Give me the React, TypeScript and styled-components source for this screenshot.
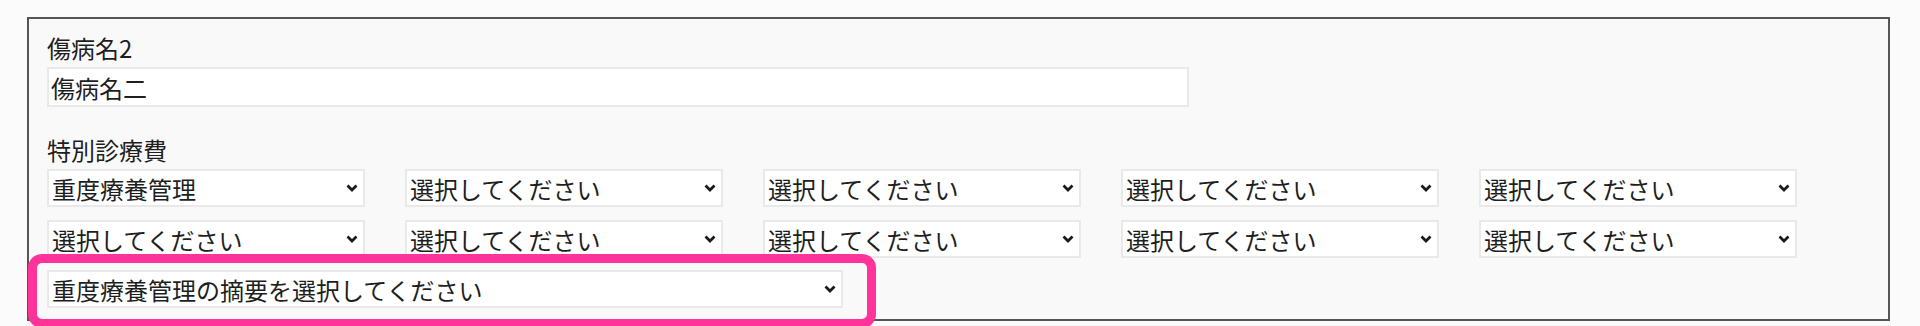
import styled, { createGlobalStyle } from 'styled-components';

const GlobalStyle = createGlobalStyle`
  html, body {
    margin: 0;
    padding: 0;
    height: 326px;
    overflow: hidden;
    background: #fbfbfb;
    font-family: "Noto Sans CJK JP", "Noto Sans", sans-serif;
    color: #1e1e1e;
  }
`;

const Page = styled.div`
  padding: 17px 0 0 27px;
  height: 326px;
  box-sizing: border-box;
  overflow: hidden;
`;

const Panel = styled.div`
  width: 1863px;
  box-sizing: border-box;
  border: 2px solid #555555;
  background: #f9f9f9;
  padding: 11px 18px 11px;
`;

const Field = styled.div<{ $gap?: number }>`
  margin-top: ${(p) => p.$gap ?? 0}px;
`;

const Label = styled.div`
  font-size: 24px;
  line-height: 36px;
  margin-bottom: 1px;
`;

const TextInput = styled.input`
  display: block;
  width: 1142px;
  height: 40px;
  box-sizing: border-box;
  border: 2px solid #e9e9e9;
  background: #ffffff;
  padding: 0 2px;
  font-family: inherit;
  font-size: 24px;
  color: #1e1e1e;
  outline: none;
`;

const SelectGrid = styled.div`
  display: grid;
  grid-template-columns: repeat(5, 318px);
  column-gap: 40px;
  row-gap: 13px;
`;

const SelectWrap = styled.div<{ $width?: number }>`
  position: relative;
  width: ${(p) => (p.$width ? `${p.$width}px` : 'auto')};
  height: 38px;
  box-sizing: border-box;
  border: 2px solid #e9e9e9;
  background: #ffffff;
`;

const NativeSelect = styled.select`
  appearance: none;
  width: 100%;
  height: 100%;
  border: none;
  background: transparent;
  padding: 0 24px 0 3px;
  font-family: inherit;
  font-size: 24px;
  color: #1e1e1e;
  outline: none;
`;

const Chevron = styled.svg`
  position: absolute;
  right: 5px;
  top: 50%;
  margin-top: -4px;
  pointer-events: none;
`;

const HighlightRow = styled.div`
  position: relative;
  margin-top: 12px;
`;

const Highlight = styled.div`
  position: absolute;
  left: -19px;
  top: -16px;
  width: 848px;
  height: 74px;
  box-sizing: border-box;
  border: 9px solid #ff3399;
  border-radius: 14px;
  pointer-events: none;
`;

const Select = ({ value, width }: { value: string; width?: number }) => (
  <SelectWrap $width={width}>
    <NativeSelect defaultValue={value}>
      <option>{value}</option>
    </NativeSelect>
    <Chevron width="12" height="8" viewBox="0 0 12 8">
      <polyline points="1.5,1.5 6,6 10.5,1.5" fill="none" stroke="#1a1a1a" strokeWidth="2.8" />
    </Chevron>
  </SelectWrap>
);

const placeholder = '選択してください';
const specials = [
  '重度療養管理',
  placeholder,
  placeholder,
  placeholder,
  placeholder,
  placeholder,
  placeholder,
  placeholder,
  placeholder,
  placeholder,
];

export default function App() {
  return (
    <>
      <GlobalStyle />
      <Page>
        <Panel>
          <Field>
            <Label>傷病名2</Label>
            <TextInput defaultValue="傷病名二" />
          </Field>
          <Field $gap={25}>
            <Label>特別診療費</Label>
            <SelectGrid>
              {specials.map((v, i) => (
                <Select key={i} value={v} />
              ))}
            </SelectGrid>
            <HighlightRow>
              <Select value="重度療養管理の摘要を選択してください" width={796} />
              <Highlight />
            </HighlightRow>
          </Field>
        </Panel>
      </Page>
    </>
  );
}
